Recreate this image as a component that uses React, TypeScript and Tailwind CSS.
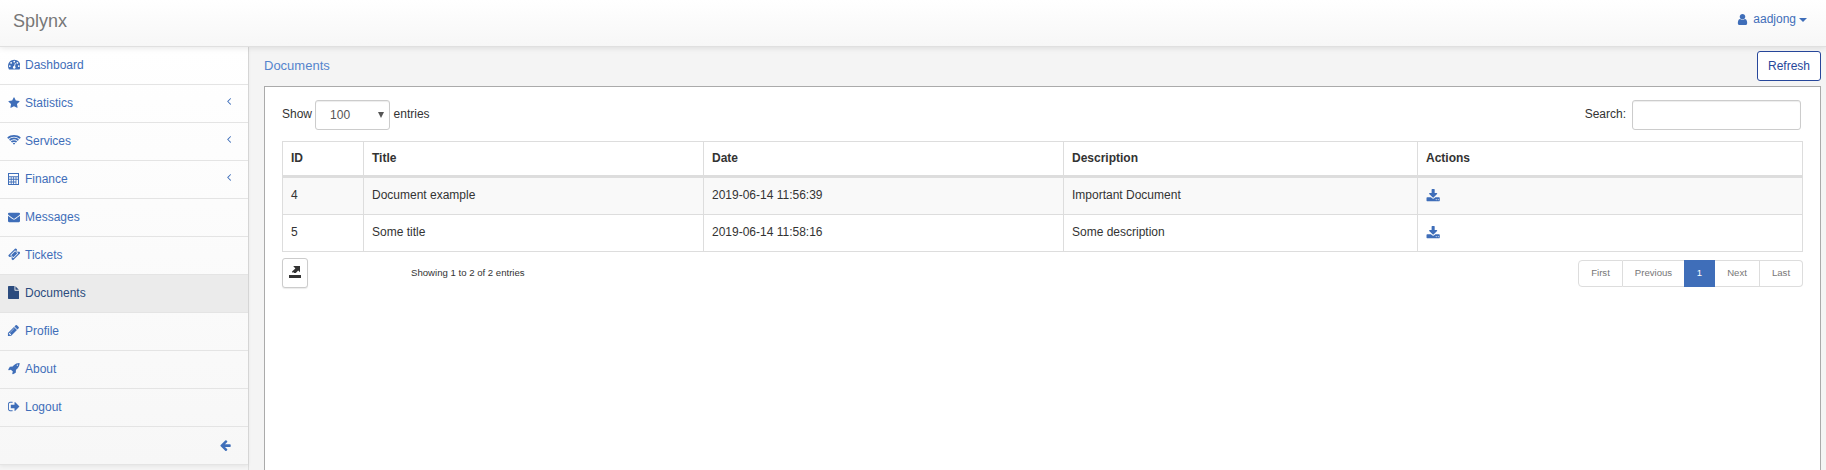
import React from "react";

type IconProps = { d: string; box?: string; className?: string };

function Icon({ d, box = "0 0 1792 1792", className = "" }: IconProps) {
  return (
    <svg viewBox={box} fill="currentColor" fillRule="evenodd" className={"block shrink-0 " + className}>
      <path d={d} />
    </svg>
  );
}

const paths = {
  dashboard:
    "M384 1152q0-53-37.5-90.5t-90.5-37.5-90.5 37.5-37.5 90.5 37.5 90.5 90.5 37.5 90.5-37.5 37.5-90.5zm192-448q0-53-37.5-90.5t-90.5-37.5-90.5 37.5-37.5 90.5 37.5 90.5 90.5 37.5 90.5-37.5 37.5-90.5zm428 481l101-382q6-26-7.5-48.5t-38.5-29.5-48 6.5-30 39.5l-101 382q-60 5-107 43.5t-63 98.5q-20 77 20 146t117 89 146-20 89-117q16-60-6-117t-72-91zm660-33q0-53-37.5-90.5t-90.5-37.5-90.5 37.5-37.5 90.5 37.5 90.5 90.5 37.5 90.5-37.5 37.5-90.5zm-640-640q0-53-37.5-90.5t-90.5-37.5-90.5 37.5-37.5 90.5 37.5 90.5 90.5 37.5 90.5-37.5 37.5-90.5zm448 192q0-53-37.5-90.5t-90.5-37.5-90.5 37.5-37.5 90.5 37.5 90.5 90.5 37.5 90.5-37.5 37.5-90.5zm320 448q0 261-141 483-19 29-54 29h-1402q-35 0-54-29-141-221-141-483 0-182 71-348t191-286 286-191 348-71 348 71 286 191 191 286 71 348z",
  star: "M1728 647q0 22-26 48l-363 354 86 500q1 7 1 20 0 21-10.5 35.5t-30.5 14.5q-19 0-40-12l-449-236-449 236q-22 12-40 12-21 0-31.5-14.5t-10.5-35.5q0-6 2-20l86-500-364-354q-25-27-25-48 0-37 56-46l502-73 225-455q19-41 49-41t49 41l225 455 502 73q56 9 56 46z",
  wifi: "M1024 1523q-20 0-93-73.5t-73-93.5q0-32 62.5-54t103.5-22 103.5 22 62.5 54q0 20-73 93.5t-93 73.5zm270-271q-2 0-40-25t-101.5-50-128.5-25-128.5 25-101 50-40.5 25q-18 0-93.5-75t-75.5-93q0-13 10-23 78-77 196-121t233-44 233 44 196 121q10 10 10 23 0 18-75.5 93t-93.5 75zm273-272q-11 0-23-8-136-105-252-154.5t-268-49.5q-85 0-170.5 22t-149 53-113.5 62-79 53-31 22q-17 0-92-75t-75-93q0-12 10-22 132-132 320-205t380-73 380 73 320 205q10 10 10 22 0 18-75 93t-92 75zm271-271q-11 0-22-9-179-157-371.5-236.5t-420.5-79.5-420.5 79.5-371.5 236.5q-11 9-22 9-17 0-92.5-75t-75.5-93q0-13 10-23 187-186 445-288t527-102 527 102 445 288q10 10 10 23 0 18-75.5 93t-92.5 75z",
  calculator:
    "M0 0H11V12H0ZM1 1V3.2H10V1ZM1 4.2V5.8H2.8V4.2ZM3.6 4.2V5.8H5.2V4.2ZM6 4.2V5.8H7.6V4.2ZM8.4 4.2V5.8H10V4.2ZM1 6.8V8.4H2.8V6.8ZM3.6 6.8V8.4H5.2V6.8ZM6 6.8V8.4H7.6V6.8ZM8.4 6.8V11H10V6.8ZM1 9.4V11H2.8V9.4ZM3.6 9.4V11H5.2V9.4ZM6 9.4V11H7.6V9.4Z",
  envelope:
    "M1792 710v794q0 66-47 113t-113 47h-1472q-66 0-113-47t-47-113v-794q44 49 101 87 362 246 497 345 57 42 92.5 65.5t94.5 48 110 24.5h2q51 0 110-24.5t94.5-48 92.5-65.5q170-123 498-345 57-39 100-87zm0-294q0 79-49 151t-122 123q-376 261-468 325-10 7-42.5 31t-54 38.5-52 32.5-57.5 27-50 9h-2q-23 0-50-9t-57.5-27-52-32.5-54-38.5-42.5-31q-91-64-262-182.5t-205-142.5q-62-42-117-115.5t-55-136.5q0-78 41.5-130t118.5-52h1472q65 0 112.5 47t47.5 113z",
  ticket:
    "M1024 452l316 316-572 572-316-316zm-211 979l618-618q19-19 19-45t-19-45l-362-362q-18-18-45-18t-45 18l-618 618q-19 19-19 45t19 45l362 362q18 18 45 18t45-18zm889-637l-907 908q-37 37-90.5 37t-90.5-37l-126-125q56-56 56-136t-56-136-136-56-136 56l-125-126q-37-37-37-90.5t37-90.5l907-906q37-37 90.5-37t90.5 37l125 125q-56 56-56 136t56 136 136 56 136-56l126 125q37 37 37 90.5t-37 90.5z",
  file: "M1152 512v-472q22 14 36 28l408 408q14 14 28 36h-472zm-128 32q0 40 28 68t68 28h544v1056q0 40-28 68t-68 28h-1344q-40 0-68-28t-28-68v-1600q0-40 28-68t68-28h800v544z",
  pencil:
    "M491 1536l91-91-235-235-91 91v107h128v128h107zm523-928q0-22-22-22-10 0-17 7l-542 542q-7 7-7 17 0 22 22 22 10 0 17-7l542-542q7-7 7-17zm-54-192l416 416-832 832h-416v-416zm683 96q0 53-37 90l-166 166-416-416 166-165q36-38 90-38 53 0 91 38l235 234q37 39 37 91z",
  rocket:
    "M1440 448q0-40-28-68t-68-28-68 28-28 68 28 68 68 28 68-28 28-68zm224-288q0 249-75.5 430.5t-253.5 360.5q-81 80-195 176l-20 379q-2 16-16 26l-384 224q-7 4-16 4-12 0-23-9l-64-64q-13-14-8-32l85-276-281-281-276 85q-3 1-9 1-14 0-23-9l-64-64q-17-19-5-39l224-384q10-14 26-16l379-20q96-114 176-195 188-187 358-258t431-71q14 0 24 9.5t10 22.5z",
  signOut:
    "M640 1440q0 4 1 20t.5 26.5-3 23.5-10 19.5-20.5 6.5h-320q-119 0-203.5-84.5t-84.5-203.5v-704q0-119 84.5-203.5t203.5-84.5h320q13 0 22.5 9.5t9.5 22.5q0 4 1 20t.5 26.5-3 23.5-10 19.5-20.5 6.5h-320q-66 0-113 47t-47 113v704q0 66 47 113t113 47h312l11.5 1 11.5 3 8 5.5 7 9 2 13.5zm928-544q0 26-19 45l-544 544q-19 19-45 19t-45-19-19-45v-288h-448q-26 0-45-19t-19-45v-384q0-26 19-45t45-19h448v-288q0-26 19-45t45-19 45 19l544 544q19 19 19 45z",
  user: "M1536 1399q0 109-62.5 187t-150.5 78h-854q-88 0-150.5-78t-62.5-187q0-85 8.5-160.5t31.5-152 58.5-131 94-89 134.5-34.5q131 128 313 128t313-128q76 0 134.5 34.5t94 89 58.5 131 31.5 152 8.5 160.5zm-256-887q0 159-112.5 271.5t-271.5 112.5-271.5-112.5-112.5-271.5 112.5-271.5 271.5-112.5 271.5 112.5 112.5 271.5z",
  arrowLeft:
    "M1536 896v128q0 53-32.5 90.5t-84.5 37.5h-704l293 294q38 36 38 90t-38 90l-75 76q-37 37-90 37-52 0-91-37l-651-652q-37-37-37-90 0-52 37-91l651-650q38-38 91-38 52 0 90 38l75 74q38 38 38 91t-38 91l-293 293h704q52 0 84.5 37.5t32.5 90.5z",
  angleLeft:
    "M1203 544q0 13-10 23l-393 393 393 393q10 10 10 23t-10 23l-50 50q-10 10-23 10t-23-10l-466-466q-10-10-10-23t10-23l466-466q10-10 23-10t23 10l50 50q10 10 10 23z",
  download:
    "M1344 1344q0-26-19-45t-45-19-45 19-19 45 19 45 45 19 45-19 19-45zm256 0q0-26-19-45t-45-19-45 19-19 45 19 45 45 19 45-19 19-45zm128-224v320q0 40-28 68t-68 28h-1472q-40 0-68-28t-28-68v-320q0-40 28-68t68-28h465l135 136q58 56 136 56t136-56l136-136h464q40 0 68 28t28 68zm-325-569q17 41-14 70l-448 448q-18 19-45 19t-45-19l-448-448q-31-29-14-70 17-39 59-39h256v-448q0-26 19-45t45-19h256q26 0 45 19t19 45v448h256q42 0 59 39z",
  export: "M0 9H12V12H0ZM4.2 0H11V6.2L9.2 4.6L6.8 7H5V6L3.8 7L3 5.6L6.4 2.4Z",
  caret: "M0 0H8L4 4Z",
};

type Item = { label: string; d: string; box?: string; icon: string; sub?: boolean; active?: boolean };

const items: Item[] = [
  { label: "Dashboard", d: paths.dashboard, icon: "size-[12.5px] -ml-[0.4px]" },
  { label: "Statistics", d: paths.star, icon: "size-[12px]", sub: true },
  {
    label: "Services",
    d: paths.wifi,
    box: "0 0 2048 1792",
    icon: "w-[14px] h-[12.25px] -ml-[1px]",
    sub: true,
  },
  { label: "Finance", d: paths.calculator, box: "0 0 11 12", icon: "w-[11px] h-[12px]", sub: true },
  { label: "Messages", d: paths.envelope, icon: "size-[12px]" },
  { label: "Tickets", d: paths.ticket, icon: "size-[12.5px] -ml-[0.3px]" },
  {
    label: "Documents",
    d: paths.file,
    box: "128 0 1536 1792",
    icon: "w-[11.1px] h-[13px]",
    active: true,
  },
  { label: "Profile", d: paths.pencil, icon: "size-[13px] -ml-[0.7px]" },
  { label: "About", d: paths.rocket, icon: "size-[12.5px]" },
  { label: "Logout", d: paths.signOut, icon: "size-[13px] -ml-[0.3px]" },
];

const rows = [
  ["4", "Document example", "2019-06-14 11:56:39", "Important Document"],
  ["5", "Some title", "2019-06-14 11:58:16", "Some description"],
];

const cell = "border border-[#dddddd] px-2 text-left align-top";

const page = "flex items-center justify-center border-[#dddddd] pb-[1px]";

export default function App() {
  return (
    <div className="flex h-[470px] w-full flex-col overflow-hidden bg-[#f4f4f4] font-['Liberation_Sans',Arial,sans-serif] text-[12px] leading-[17px] text-[#333333]">
      <header className="relative z-10 flex h-[47px] shrink-0 justify-between border-b border-[#e0e0e0] bg-linear-to-b from-white to-[#f7f7f7] shadow-[0_1px_6px_rgba(0,0,0,0.1)]">
        <span className="pt-[11px] pl-[13px] text-[18px] leading-[20px] text-[#777777]">Splynx</span>
        <a className="mt-[11px] flex h-[17px] items-center pr-[19px] text-[#3f6eb9]">
          <Icon d={paths.user} className="mr-[4px] mb-[1px] size-[13px]" />
          aadjong
          <Icon d={paths.caret} box="0 0 8 4" className="ml-[3px] h-[4px] w-[8px]" />
        </a>
      </header>
      <div className="flex min-h-0 flex-1">
        <aside className="w-[249px] shrink-0 border-r border-[#dcdcdc]">
          <nav className="bg-linear-to-b from-white to-[#f7f7f7] shadow-[0_1px_4px_rgba(0,0,0,0.07)]">
            {items.map((i) => (
              <a
                key={i.label}
                className={
                  "flex h-[38px] items-center border-b border-[#e4e4e4] pl-[8px] " +
                  (i.active ? "bg-[#ebebeb] text-[#2b4b7e]" : "text-[#3f6eb9]")
                }
              >
                <span className="flex w-[17px] shrink-0 pb-[2px]">
                  <Icon d={i.d} box={i.box} className={i.icon} />
                </span>
                <span className="flex-1">{i.label}</span>
                {i.sub && <Icon d={paths.angleLeft} className="mr-[13px] mb-[5px] size-[12px]" />}
              </a>
            ))}
            <div className="flex h-[38px] items-center justify-end border-b border-[#e4e4e4] pr-[15.5px] pb-[1px] text-[#3f6eb9]">
              <Icon d={paths.arrowLeft} className="size-[12.5px]" />
            </div>
          </nav>
        </aside>
        <main className="flex min-w-0 flex-1 flex-col pr-[5px] pl-[15px]">
          <div className="flex h-[39px] shrink-0 justify-between pt-[4px]">
            <h1 className="pt-[6px] text-[13px] leading-[18px] text-[#5484cd]">Documents</h1>
            <button className="h-[30px] w-[64px] rounded-[3px] border border-[#27479b] bg-white text-[#27479b]">
              Refresh
            </button>
          </div>
          <section className="flex-1 border border-b-0 border-[#aaaaaa] bg-white px-[17px] pt-[13px]">
            <div className="flex h-[30px] justify-between">
              <label className="flex items-center">
                <span className="pb-[1px]">Show</span>
                <span className="mr-[3.5px] ml-[3px] flex h-[30px] w-[75px] items-center justify-between rounded-[3px] border border-[#cccccc] pr-[5px] pl-[14px] text-[#555555] shadow-[inset_0_1px_1px_rgba(0,0,0,0.075)]">
                  100
                  <Icon d="M0 0H6L3 6Z" box="0 0 6 6" className="size-[6px]" />
                </span>
                <span className="pb-[1px]">entries</span>
              </label>
              <label className="flex items-center pr-[2px]">
                <span className="pb-[1px]">Search:</span>
                <input className="ml-[6px] h-[30px] w-[169px] rounded-[3px] border border-[#cccccc] bg-white shadow-[inset_0_1px_1px_rgba(0,0,0,0.075)]" />
              </label>
            </div>
            <table className="mt-[11px] w-[1521px] table-fixed border-collapse">
              <colgroup>
                <col className="w-[81px]" />
                <col className="w-[340px]" />
                <col className="w-[360px]" />
                <col className="w-[354px]" />
                <col />
              </colgroup>
              <thead>
                <tr className="h-[35px]">
                  {["ID", "Title", "Date", "Description", "Actions"].map((h) => (
                    <th key={h} className={cell + " border-b-3 pt-[8px] font-bold"}>
                      {h}
                    </th>
                  ))}
                </tr>
              </thead>
              <tbody>
                {rows.map((r) => (
                  <tr key={r[0]} className="h-[37px] odd:bg-[#f9f9f9] first:h-[38px]">
                    {r.map((c) => (
                      <td key={c} className={cell + " pt-[9px]"}>
                        {c}
                      </td>
                    ))}
                    <td className={cell + " pt-[11px] text-[#3f6eb9]"}>
                      <Icon d={paths.download} className="-ml-[0.5px] size-[14.3px]" />
                    </td>
                  </tr>
                ))}
              </tbody>
            </table>
            <div className="flex w-[1521px] items-start pt-[6px] text-[9.6px] leading-[14px]">
              <button className="flex h-[30px] w-[26px] justify-center rounded-[3px] border border-[#cccccc] bg-white pt-[7px] pr-[1px] shadow-[0_1px_1px_rgba(0,0,0,0.08)]">
                <Icon d={paths.export} box="0 0 12 12" className="size-[12px]" />
              </button>
              <span className="flex-1 pt-[8px] pl-[103px]">Showing 1 to 2 of 2 entries</span>
              <div className="mt-[2px] flex h-[27px] text-[#777777]">
                <a className={page + " w-[45px] rounded-l-[4px] border"}>First</a>
                <a className={page + " w-[61px] border-y"}>Previous</a>
                <a className={page + " w-[31px] bg-[#3f6eb9] text-white"}>1</a>
                <a className={page + " w-[45px] border-y border-r"}>Next</a>
                <a className={page + " w-[43px] rounded-r-[4px] border border-l-0"}>Last</a>
              </div>
            </div>
          </section>
        </main>
      </div>
    </div>
  );
}
